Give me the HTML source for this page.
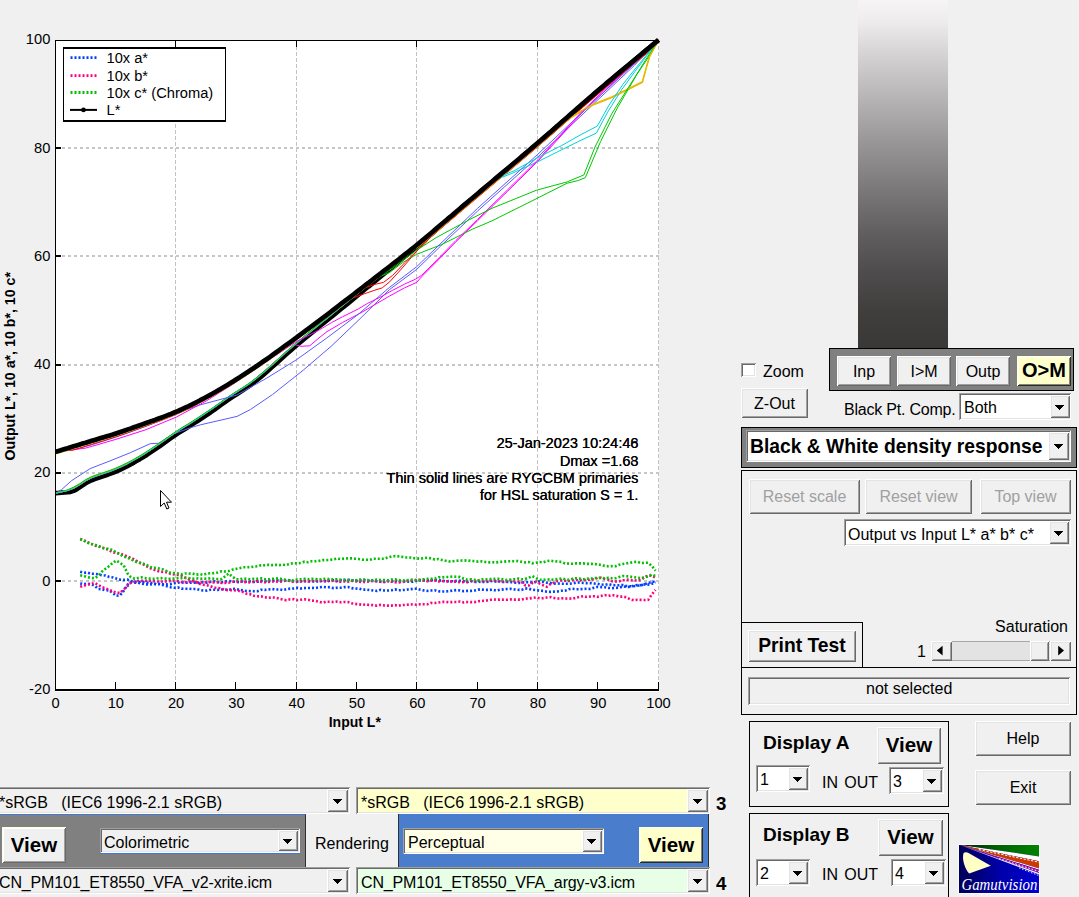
<!DOCTYPE html>
<html><head><meta charset="utf-8"><title>Gamutvision</title>
<style>
*{box-sizing:border-box;margin:0;padding:0}
html,body{width:1079px;height:897px;overflow:hidden;background:#f0f0f0}
body{position:relative;font-family:"Liberation Sans",sans-serif;font-size:16px;color:#000}
.a{position:absolute;white-space:nowrap}
.t{position:absolute;white-space:nowrap;line-height:1;}
.btn{position:absolute;background:#f0f0f0;box-shadow:inset 1px 1px 0 #fff,inset -1px -1px 0 #696969,inset 2px 2px 0 #e3e3e3,inset -2px -2px 0 #a0a0a0;display:flex;align-items:center;justify-content:center;white-space:nowrap;padding-top:2px}
.btn.y{background:#ffffcc;box-shadow:inset 1px 1px 0 #ffffee,inset -1px -1px 0 #2a2a2a,inset 2px 2px 0 #ffffd8,inset -2px -2px 0 #86866c}
.btn.b{font-weight:bold}
.btn.dis{color:#a0a0a0;padding-top:0}
.cb{position:absolute;background:#fff;box-shadow:inset 1px 1px 0 #a0a0a0,inset -1px -1px 0 #fff,inset 2px 2px 0 #696969,inset -2px -2px 0 #e3e3e3;white-space:nowrap;overflow:hidden}
.cb .tx{position:absolute;left:5px;top:0;bottom:0;display:flex;align-items:center}
.cb .ar{position:absolute;right:2px;top:2px;bottom:2px;width:20px;background:#f0f0f0;box-shadow:inset 1px 1px 0 #fff,inset -1px -1px 0 #696969,inset 2px 2px 0 #e3e3e3,inset -2px -2px 0 #a0a0a0}
.cb .ar:after{content:"";position:absolute;left:50%;top:50%;margin-left:-1px;margin-top:-2px;width:1px;height:1px;background:#000;box-shadow:-4px 0px 0 #000,-3px 0px 0 #000,-2px 0px 0 #000,-1px 0px 0 #000,0px 0px 0 #000,1px 0px 0 #000,2px 0px 0 #000,3px 0px 0 #000,4px 0px 0 #000,-3px 1px 0 #000,-2px 1px 0 #000,-1px 1px 0 #000,0px 1px 0 #000,1px 1px 0 #000,2px 1px 0 #000,3px 1px 0 #000,-2px 2px 0 #000,-1px 2px 0 #000,0px 2px 0 #000,1px 2px 0 #000,2px 2px 0 #000,-1px 3px 0 #000,0px 3px 0 #000,1px 3px 0 #000,0px 4px 0 #000}
.pn{position:absolute;border:1px solid #000}
.sunk{position:absolute;box-shadow:inset 1px 1px 0 #a0a0a0,inset -1px -1px 0 #fff,inset 2px 2px 0 #696969,inset -2px -2px 0 #e3e3e3}
svg text{font-family:"Liberation Sans",sans-serif}
</style></head>
<body>
<svg class="a" style="left:0;top:0" width="1079" height="897" viewBox="0 0 1079 897">
<rect x="55" y="40" width="604" height="652" fill="#fff"/>
<line x1="175.5" y1="41" x2="175.5" y2="689" stroke="#c3c3c3" stroke-width="1" stroke-dasharray="4 2" stroke-dashoffset="1"/>
<line x1="296.5" y1="41" x2="296.5" y2="689" stroke="#c3c3c3" stroke-width="1" stroke-dasharray="4 2" stroke-dashoffset="1"/>
<line x1="416.5" y1="41" x2="416.5" y2="689" stroke="#c3c3c3" stroke-width="1" stroke-dasharray="4 2" stroke-dashoffset="1"/>
<line x1="537.5" y1="41" x2="537.5" y2="689" stroke="#c3c3c3" stroke-width="1" stroke-dasharray="4 2" stroke-dashoffset="1"/>
<line x1="658.5" y1="41" x2="658.5" y2="689" stroke="#c3c3c3" stroke-width="1" stroke-dasharray="4 2" stroke-dashoffset="1"/>
<line x1="62" y1="581" x2="659" y2="581" stroke="#c6c6c6" stroke-width="2" stroke-dasharray="3 3"/>
<line x1="62" y1="473" x2="659" y2="473" stroke="#c6c6c6" stroke-width="2" stroke-dasharray="3 3"/>
<line x1="62" y1="365" x2="659" y2="365" stroke="#c6c6c6" stroke-width="2" stroke-dasharray="3 3"/>
<line x1="62" y1="256" x2="659" y2="256" stroke="#c6c6c6" stroke-width="2" stroke-dasharray="3 3"/>
<line x1="62" y1="148" x2="659" y2="148" stroke="#c6c6c6" stroke-width="2" stroke-dasharray="3 3"/>
<path d="M80.2 571.8 L83.8 572.7 L87.5 572.6 L91.1 573.8 L94.7 573.8 L98.3 574.3 L101.9 575.4 L105.5 575.5 L109.2 576.9 L112.8 577.4 L116.4 578.6 L120.0 579.6 L123.6 579.9 L127.3 579.6 L130.9 581.0 L134.5 581.9 L138.1 582.1 L141.7 581.6 L145.3 582.2 L149.0 583.1 L152.6 582.8 L156.2 584.4 L159.8 584.2 L163.4 585.2 L167.1 586.3 L170.7 587.3 L174.3 587.8 L177.9 587.4 L181.5 588.6 L185.1 588.8 L188.8 588.7 L192.4 589.1 L196.0 589.0 L199.6 589.9 L203.2 590.5 L206.9 590.6 L210.5 589.8 L214.1 589.7 L217.7 589.9 L221.3 589.5 L224.9 589.5 L228.6 589.8 L232.2 589.1 L235.8 588.8 L239.4 589.8 L243.0 590.4 L246.7 591.0 L250.3 591.1 L253.9 591.2 L257.5 591.2 L261.1 589.7 L264.7 589.9 L268.4 589.5 L272.0 588.9 L275.6 589.6 L279.2 589.4 L282.8 590.0 L286.4 589.2 L290.1 588.6 L293.7 588.5 L297.3 587.9 L300.9 588.5 L304.5 588.1 L308.2 588.0 L311.8 587.9 L315.4 588.1 L319.0 587.4 L322.6 586.8 L326.2 587.3 L329.9 587.1 L333.5 588.1 L337.1 587.7 L340.7 587.7 L344.3 587.1 L348.0 587.1 L351.6 588.1 L355.2 588.6 L358.8 588.5 L362.4 589.6 L366.0 589.6 L369.7 590.1 L373.3 590.5 L376.9 590.9 L380.5 589.8 L384.1 590.4 L387.8 590.5 L391.4 590.3 L395.0 589.4 L398.6 590.3 L402.2 590.1 L405.8 589.9 L409.5 589.2 L413.1 588.9 L416.7 588.7 L420.3 589.8 L423.9 590.4 L427.6 590.9 L431.2 590.5 L434.8 590.2 L438.4 591.3 L442.0 591.5 L445.6 591.4 L449.3 591.2 L452.9 590.5 L456.5 590.1 L460.1 590.5 L463.7 591.2 L467.3 590.9 L471.0 590.9 L474.6 590.5 L478.2 589.6 L481.8 589.6 L485.4 589.9 L489.1 589.9 L492.7 589.8 L496.3 590.7 L499.9 589.8 L503.5 589.4 L507.1 589.0 L510.8 588.8 L514.4 589.4 L518.0 589.8 L521.6 589.9 L525.2 588.4 L528.9 588.8 L532.5 589.7 L536.1 590.1 L539.7 590.7 L543.3 590.9 L546.9 591.7 L550.6 591.9 L554.2 591.6 L557.8 591.4 L561.4 590.7 L565.0 590.8 L568.7 589.3 L572.3 588.8 L575.9 589.2 L579.5 589.2 L583.1 589.0 L586.7 588.8 L590.4 589.0 L594.0 587.8 L597.6 586.8 L601.2 587.1 L604.8 587.2 L608.5 587.9 L612.1 588.3 L615.7 587.9 L619.3 587.7 L622.9 586.5 L626.5 586.8 L630.2 587.1 L633.8 585.5 L637.4 585.0 L641.0 585.2 L644.6 584.4 L648.2 584.6 L651.9 583.7 L655.5 582.2" fill="none" stroke="#0040ff" stroke-width="2.6" stroke-dasharray="2 2"/>
<path d="M80.2 538.9 L83.8 540.2 L87.5 542.2 L91.1 543.8 L94.7 545.6 L98.3 546.2 L101.9 547.6 L105.5 548.5 L109.2 550.4 L112.8 552.3 L116.4 552.9 L120.0 553.6 L123.6 555.0 L127.3 556.4 L130.9 557.9 L134.5 559.5 L138.1 562.0 L141.7 563.6 L145.3 565.4 L149.0 567.6 L152.6 569.3 L156.2 570.4 L159.8 571.6 L163.4 572.0 L167.1 572.3 L170.7 573.9 L174.3 574.5 L177.9 575.0 L181.5 575.7 L185.1 577.6 L188.8 579.3 L192.4 580.7 L196.0 582.2 L199.6 583.8 L203.2 584.7 L206.9 585.3 L210.5 586.3 L214.1 587.6 L217.7 588.1 L221.3 588.3 L224.9 590.0 L228.6 590.2 L232.2 590.1 L235.8 590.5 L239.4 591.0 L243.0 592.0 L246.7 593.8 L250.3 594.3 L253.9 595.8 L257.5 596.3 L261.1 596.4 L264.7 597.3 L268.4 597.9 L272.0 597.4 L275.6 597.6 L279.2 598.7 L282.8 599.6 L286.4 600.2 L290.1 599.3 L293.7 599.1 L297.3 600.2 L300.9 599.7 L304.5 599.3 L308.2 599.7 L311.8 600.6 L315.4 600.8 L319.0 601.8 L322.6 602.7 L326.2 601.7 L329.9 601.7 L333.5 602.0 L337.1 601.6 L340.7 602.3 L344.3 602.0 L348.0 602.0 L351.6 603.2 L355.2 603.9 L358.8 604.3 L362.4 604.8 L366.0 604.5 L369.7 605.0 L373.3 605.1 L376.9 605.7 L380.5 604.9 L384.1 605.4 L387.8 605.6 L391.4 605.6 L395.0 605.1 L398.6 605.7 L402.2 605.0 L405.8 604.9 L409.5 604.6 L413.1 604.2 L416.7 604.7 L420.3 604.2 L423.9 604.2 L427.6 604.3 L431.2 602.9 L434.8 603.0 L438.4 602.5 L442.0 601.9 L445.6 601.9 L449.3 602.2 L452.9 602.1 L456.5 602.0 L460.1 601.5 L463.7 602.4 L467.3 602.0 L471.0 602.1 L474.6 602.1 L478.2 601.2 L481.8 601.0 L485.4 600.7 L489.1 600.1 L492.7 599.4 L496.3 599.7 L499.9 599.6 L503.5 599.7 L507.1 599.7 L510.8 599.4 L514.4 599.6 L518.0 599.6 L521.6 599.6 L525.2 598.7 L528.9 598.5 L532.5 598.0 L536.1 597.5 L539.7 598.3 L543.3 598.2 L546.9 597.5 L550.6 597.1 L554.2 598.0 L557.8 598.5 L561.4 598.2 L565.0 598.6 L568.7 598.5 L572.3 598.7 L575.9 597.7 L579.5 596.9 L583.1 596.2 L586.7 597.0 L590.4 596.5 L594.0 596.2 L597.6 596.8 L601.2 595.9 L604.8 595.1 L608.5 595.9 L612.1 595.0 L615.7 595.7 L619.3 596.6 L622.9 596.6 L626.5 597.3 L630.2 599.3 L633.8 600.2 L637.4 599.8 L641.0 599.9 L644.6 600.0 L648.2 599.8 L651.9 594.4 L655.5 589.9" fill="none" stroke="#ff0080" stroke-width="2.6" stroke-dasharray="2 2"/>
<path d="M80.2 539.2 L83.8 540.6 L87.5 542.7 L91.1 543.9 L94.7 544.7 L98.3 545.9 L101.9 547.9 L105.5 548.2 L109.2 549.2 L112.8 550.0 L116.4 552.6 L120.0 554.5 L123.6 556.7 L127.3 557.4 L130.9 559.3 L134.5 561.3 L138.1 562.6 L141.7 563.2 L145.3 564.3 L149.0 566.3 L152.6 567.9 L156.2 567.8 L159.8 568.8 L163.4 569.5 L167.1 571.3 L170.7 572.9 L174.3 573.0 L177.9 573.5 L181.5 574.4 L185.1 573.5 L188.8 573.6 L192.4 573.5 L196.0 574.7 L199.6 574.2 L203.2 574.8 L206.9 573.5 L210.5 573.3 L214.1 573.1 L217.7 572.5 L221.3 571.3 L224.9 571.5 L228.6 571.1 L232.2 569.7 L235.8 568.9 L239.4 568.2 L243.0 567.3 L246.7 567.3 L250.3 567.1 L253.9 566.6 L257.5 566.3 L261.1 565.2 L264.7 565.2 L268.4 564.8 L272.0 565.1 L275.6 564.8 L279.2 565.1 L282.8 564.8 L286.4 565.0 L290.1 563.7 L293.7 563.2 L297.3 563.4 L300.9 562.9 L304.5 561.7 L308.2 562.2 L311.8 561.2 L315.4 561.2 L319.0 560.9 L322.6 560.1 L326.2 560.2 L329.9 559.9 L333.5 559.4 L337.1 558.5 L340.7 559.1 L344.3 558.6 L348.0 558.4 L351.6 558.4 L355.2 558.7 L358.8 559.0 L362.4 559.6 L366.0 559.8 L369.7 559.9 L373.3 558.7 L376.9 558.7 L380.5 558.8 L384.1 558.8 L387.8 557.4 L391.4 556.4 L395.0 556.1 L398.6 556.4 L402.2 556.9 L405.8 557.4 L409.5 557.5 L413.1 558.3 L416.7 558.3 L420.3 558.8 L423.9 558.1 L427.6 557.7 L431.2 558.4 L434.8 559.5 L438.4 559.0 L442.0 560.0 L445.6 560.7 L449.3 561.5 L452.9 561.2 L456.5 560.8 L460.1 560.5 L463.7 560.7 L467.3 560.3 L471.0 561.0 L474.6 561.1 L478.2 561.6 L481.8 561.4 L485.4 562.0 L489.1 562.4 L492.7 562.3 L496.3 562.4 L499.9 561.9 L503.5 561.7 L507.1 561.3 L510.8 561.3 L514.4 561.2 L518.0 561.0 L521.6 561.7 L525.2 562.4 L528.9 562.0 L532.5 563.3 L536.1 562.7 L539.7 562.0 L543.3 562.4 L546.9 561.0 L550.6 560.7 L554.2 561.3 L557.8 561.6 L561.4 561.9 L565.0 563.4 L568.7 563.6 L572.3 563.8 L575.9 563.4 L579.5 563.4 L583.1 563.4 L586.7 563.9 L590.4 563.8 L594.0 564.1 L597.6 564.2 L601.2 565.1 L604.8 565.9 L608.5 566.3 L612.1 566.1 L615.7 566.2 L619.3 564.7 L622.9 564.0 L626.5 563.4 L630.2 562.7 L633.8 562.1 L637.4 561.8 L641.0 563.1 L644.6 562.8 L648.2 562.8 L651.9 565.9 L655.5 570.7" fill="none" stroke="#00c000" stroke-width="2.6" stroke-dasharray="2 2"/>
<path d="M80.2 583.4 L83.8 584.2 L87.5 583.7 L91.1 584.2 L94.7 585.8 L98.3 588.9 L101.9 589.2 L105.5 590.3 L109.2 590.4 L112.8 592.9 L116.4 595.8 L120.0 595.4 L123.6 590.9 L127.3 585.0 L130.9 582.3 L134.5 582.6 L138.1 582.7 L141.7 583.7 L145.3 584.3 L149.0 584.6 L152.6 584.0 L156.2 584.1 L159.8 583.7 L163.4 584.2 L167.1 584.4 L170.7 584.1 L174.3 583.3 L177.9 582.7 L181.5 582.4 L185.1 582.8 L188.8 582.6 L192.4 582.6 L196.0 582.6 L199.6 583.0 L203.2 582.1 L206.9 582.6 L210.5 581.7 L214.1 581.2 L217.7 582.2 L221.3 582.2 L224.9 581.6 L228.6 580.9 L232.2 581.3 L235.8 581.8 L239.4 582.2 L243.0 581.2 L246.7 581.8 L250.3 581.5 L253.9 582.0 L257.5 581.7 L261.1 580.8 L264.7 581.5 L268.4 580.8 L272.0 580.9 L275.6 580.3 L279.2 580.2 L282.8 580.9 L286.4 580.2 L290.1 580.4 L293.7 581.2 L297.3 581.7 L300.9 581.3 L304.5 581.1 L308.2 581.2 L311.8 581.5 L315.4 581.4 L319.0 581.4 L322.6 580.6 L326.2 581.4 L329.9 580.7 L333.5 580.2 L337.1 580.9 L340.7 580.2 L344.3 580.1 L348.0 579.7 L351.6 580.4 L355.2 580.7 L358.8 580.9 L362.4 580.1 L366.0 580.2 L369.7 580.7 L373.3 580.9 L376.9 581.2 L380.5 581.8 L384.1 582.0 L387.8 581.1 L391.4 581.4 L395.0 580.6 L398.6 581.2 L402.2 581.5 L405.8 581.3 L409.5 581.7 L413.1 581.7 L416.7 580.8 L420.3 580.4 L423.9 580.3 L427.6 580.5 L431.2 580.2 L434.8 580.0 L438.4 580.4 L442.0 580.5 L445.6 581.5 L449.3 581.1 L452.9 581.3 L456.5 580.9 L460.1 580.9 L463.7 581.4 L467.3 582.1 L471.0 581.2 L474.6 581.9 L478.2 581.8 L481.8 581.9 L485.4 582.1 L489.1 581.6 L492.7 580.9 L496.3 581.6 L499.9 581.5 L503.5 582.0 L507.1 581.9 L510.8 582.1 L514.4 582.6 L518.0 582.9 L521.6 583.0 L525.2 582.1 L528.9 582.1 L532.5 582.6 L536.1 581.9 L539.7 581.3 L543.3 581.9 L546.9 582.7 L550.6 583.1 L554.2 583.6 L557.8 583.5 L561.4 583.8 L565.0 583.8 L568.7 583.8 L572.3 583.4 L575.9 582.7 L579.5 582.5 L583.1 582.9 L586.7 583.2 L590.4 583.2 L594.0 583.5 L597.6 583.7 L601.2 584.5 L604.8 584.8 L608.5 584.1 L612.1 585.1 L615.7 585.2 L619.3 585.2 L622.9 585.0 L626.5 586.0 L630.2 586.3 L633.8 586.2 L637.4 585.8 L641.0 585.3 L644.6 584.2 L648.2 583.1 L651.9 581.7 L655.5 581.7" fill="none" stroke="#0040ff" stroke-width="2.6" stroke-dasharray="2 2"/>
<path d="M80.2 586.8 L83.8 585.7 L87.5 584.6 L91.1 584.0 L94.7 582.9 L98.3 584.9 L101.9 587.1 L105.5 588.3 L109.2 589.8 L112.8 591.5 L116.4 592.4 L120.0 593.1 L123.6 589.5 L127.3 586.3 L130.9 582.7 L134.5 581.7 L138.1 581.0 L141.7 580.9 L145.3 580.9 L149.0 580.7 L152.6 581.1 L156.2 581.1 L159.8 581.9 L163.4 581.2 L167.1 581.6 L170.7 580.8 L174.3 580.7 L177.9 581.2 L181.5 581.9 L185.1 582.1 L188.8 581.7 L192.4 581.3 L196.0 582.0 L199.6 582.6 L203.2 582.2 L206.9 581.9 L210.5 582.1 L214.1 582.5 L217.7 582.1 L221.3 582.9 L224.9 582.9 L228.6 582.7 L232.2 581.8 L235.8 581.8 L239.4 581.4 L243.0 581.7 L246.7 582.2 L250.3 582.4 L253.9 581.5 L257.5 581.2 L261.1 581.7 L264.7 582.3 L268.4 582.0 L272.0 581.5 L275.6 581.5 L279.2 581.8 L282.8 581.2 L286.4 580.5 L290.1 581.1 L293.7 581.7 L297.3 581.6 L300.9 581.5 L304.5 581.0 L308.2 581.5 L311.8 580.9 L315.4 580.6 L319.0 580.8 L322.6 581.4 L326.2 580.6 L329.9 581.2 L333.5 580.7 L337.1 581.4 L340.7 581.8 L344.3 581.3 L348.0 581.6 L351.6 580.9 L355.2 581.1 L358.8 581.7 L362.4 582.0 L366.0 581.9 L369.7 581.5 L373.3 580.7 L376.9 581.5 L380.5 581.6 L384.1 581.9 L387.8 581.0 L391.4 581.6 L395.0 582.2 L398.6 582.5 L402.2 582.1 L405.8 581.2 L409.5 580.6 L413.1 580.5 L416.7 580.0 L420.3 579.8 L423.9 580.6 L427.6 581.3 L431.2 580.6 L434.8 580.4 L438.4 581.4 L442.0 581.0 L445.6 581.2 L449.3 581.3 L452.9 581.5 L456.5 581.8 L460.1 582.2 L463.7 582.0 L467.3 581.8 L471.0 580.8 L474.6 581.4 L478.2 580.5 L481.8 581.1 L485.4 581.3 L489.1 580.7 L492.7 580.4 L496.3 580.8 L499.9 581.6 L503.5 581.4 L507.1 581.5 L510.8 580.7 L514.4 581.4 L518.0 581.5 L521.6 582.0 L525.2 585.3 L528.9 585.5 L532.5 582.9 L536.1 581.6 L539.7 583.6 L543.3 585.3 L546.9 586.8 L550.6 583.9 L554.2 582.5 L557.8 581.0 L561.4 580.3 L565.0 580.7 L568.7 581.0 L572.3 580.1 L575.9 580.0 L579.5 580.4 L583.1 579.9 L586.7 580.1 L590.4 579.6 L594.0 579.4 L597.6 577.8 L601.2 577.9 L604.8 579.0 L608.5 579.7 L612.1 581.3 L615.7 581.5 L619.3 581.2 L622.9 580.3 L626.5 579.6 L630.2 580.1 L633.8 580.5 L637.4 580.4 L641.0 579.9 L644.6 577.0 L648.2 575.6 L651.9 575.8 L655.5 577.7" fill="none" stroke="#ff0080" stroke-width="2.6" stroke-dasharray="2 2"/>
<path d="M80.2 575.3 L83.8 576.0 L87.5 577.1 L91.1 577.9 L94.7 578.2 L98.3 575.9 L101.9 571.7 L105.5 568.8 L109.2 566.1 L112.8 562.8 L116.4 560.5 L120.0 562.9 L123.6 565.1 L127.3 573.1 L130.9 577.1 L134.5 578.7 L138.1 578.0 L141.7 577.4 L145.3 578.0 L149.0 578.5 L152.6 578.8 L156.2 578.6 L159.8 578.1 L163.4 578.3 L167.1 578.7 L170.7 578.8 L174.3 578.5 L177.9 578.3 L181.5 578.1 L185.1 577.9 L188.8 578.0 L192.4 578.9 L196.0 578.3 L199.6 578.7 L203.2 578.6 L206.9 578.8 L210.5 578.3 L214.1 578.8 L217.7 579.1 L221.3 579.2 L224.9 576.5 L228.6 573.6 L232.2 576.4 L235.8 579.2 L239.4 579.3 L243.0 578.5 L246.7 578.8 L250.3 579.4 L253.9 578.8 L257.5 578.8 L261.1 578.3 L264.7 579.3 L268.4 579.4 L272.0 578.9 L275.6 578.6 L279.2 578.3 L282.8 579.5 L286.4 579.8 L290.1 580.3 L293.7 580.5 L297.3 579.4 L300.9 579.3 L304.5 578.8 L308.2 579.2 L311.8 578.8 L315.4 579.1 L319.0 579.6 L322.6 579.1 L326.2 578.6 L329.9 579.5 L333.5 579.3 L337.1 579.2 L340.7 579.7 L344.3 579.7 L348.0 580.1 L351.6 580.2 L355.2 580.2 L358.8 579.7 L362.4 579.3 L366.0 579.8 L369.7 580.4 L373.3 580.2 L376.9 579.6 L380.5 580.0 L384.1 580.1 L387.8 580.3 L391.4 579.5 L395.0 579.4 L398.6 580.1 L402.2 580.5 L405.8 580.3 L409.5 579.9 L413.1 579.6 L416.7 580.2 L420.3 580.2 L423.9 579.2 L427.6 578.9 L431.2 578.8 L434.8 578.6 L438.4 577.3 L442.0 577.4 L445.6 577.0 L449.3 576.9 L452.9 576.6 L456.5 576.7 L460.1 577.1 L463.7 578.7 L467.3 579.8 L471.0 579.3 L474.6 579.8 L478.2 580.4 L481.8 579.4 L485.4 579.5 L489.1 578.9 L492.7 579.2 L496.3 578.6 L499.9 578.9 L503.5 579.5 L507.1 580.1 L510.8 579.6 L514.4 579.2 L518.0 578.5 L521.6 579.3 L525.2 579.0 L528.9 577.6 L532.5 576.1 L536.1 578.2 L539.7 579.8 L543.3 579.9 L546.9 579.1 L550.6 579.8 L554.2 579.6 L557.8 579.0 L561.4 578.4 L565.0 579.2 L568.7 579.8 L572.3 578.8 L575.9 578.2 L579.5 578.6 L583.1 579.4 L586.7 578.6 L590.4 578.8 L594.0 578.1 L597.6 578.0 L601.2 577.7 L604.8 578.4 L608.5 577.8 L612.1 578.3 L615.7 578.2 L619.3 577.0 L622.9 576.0 L626.5 576.2 L630.2 576.6 L633.8 577.2 L637.4 577.6 L641.0 578.1 L644.6 577.4 L648.2 576.3 L651.9 574.5 L655.5 576.1" fill="none" stroke="#00c000" stroke-width="2.6" stroke-dasharray="2 2"/>
<path d="M55.5 493.2 L58.5 493.0 L61.5 492.7 L64.5 492.5 L67.6 492.2 L70.6 491.8 L73.6 490.8 L76.6 489.3 L79.6 487.3 L82.6 485.3 L85.7 483.3 L88.7 481.5 L91.7 480.2 L94.7 479.0 L97.7 478.0 L100.7 477.0 L103.7 476.0 L106.8 475.0 L109.8 473.9 L112.8 472.8 L115.8 471.6 L118.8 470.3 L121.8 468.8 L124.8 467.4 L127.9 465.8 L130.9 464.2 L133.9 462.6 L136.9 460.8 L139.9 459.1 L142.9 457.3 L145.9 455.4 L149.0 453.4 L152.0 451.4 L155.0 449.3 L158.0 447.3 L161.0 445.2 L164.0 443.1 L167.1 440.9 L170.1 438.7 L173.1 436.6 L176.1 434.5 L179.1 432.6 L182.1 430.7 L185.1 428.9 L188.2 427.0 L191.2 425.1 L194.2 423.1 L197.2 421.2 L200.2 419.2 L203.2 417.2 L206.2 415.2 L209.3 413.2 L212.3 411.1 L215.3 409.0 L218.3 406.8 L221.3 404.6 L224.3 402.5 L227.4 400.3 L230.4 398.3 L233.4 396.3 L236.4 394.4 L239.4 392.5 L242.4 390.6 L245.4 388.6 L248.5 386.6 L251.5 384.4 L254.5 382.0 L257.5 379.6 L260.5 377.1 L263.5 374.6 L266.6 372.0 L269.6 369.3 L272.6 366.6 L275.6 363.9 L278.6 361.2 L281.6 358.5 L284.6 355.7 L287.7 353.0 L290.7 350.4 L293.7 347.8 L296.7 345.2 L299.7 342.7 L302.7 340.2 L305.7 337.7 L308.8 335.2 L311.8 332.7 L314.8 330.3 L317.8 327.8 L320.8 325.3 L323.8 322.9 L326.9 320.5 L329.9 318.0 L332.9 315.6 L335.9 313.1 L338.9 310.7 L341.9 308.2 L344.9 305.8 L348.0 303.4 L351.0 300.9 L354.0 298.4 L357.0 296.0 L360.0 293.5 L363.0 291.0 L366.0 288.5 L369.1 286.1 L372.1 283.6 L375.1 281.1 L378.1 278.7 L381.1 276.2 L384.1 273.7 L387.2 271.3 L390.2 268.8 L393.2 266.3 L396.2 263.8 L399.2 261.3 L402.2 258.8 L405.2 256.3 L408.3 253.8 L411.3 251.3 L414.3 248.7 L417.3 246.2 L420.3 243.6 L423.3 241.0 L426.3 238.4 L429.4 235.7 L432.4 233.1 L435.4 230.4 L438.4 227.8 L441.4 225.2 L444.4 222.5 L447.4 219.9 L450.5 217.3 L453.5 214.7 L456.5 212.2 L459.5 209.6 L462.5 207.0 L465.5 204.4 L468.6 201.9 L471.6 199.3 L474.6 196.8 L477.6 194.2 L480.6 191.7 L483.6 189.1 L486.6 186.6 L489.7 184.0 L492.7 181.5 L495.7 179.0 L498.7 176.4 L501.7 173.9 L504.7 171.4 L507.8 168.8 L510.8 166.3 L513.8 163.8 L516.8 161.2 L519.8 158.7 L522.8 156.1 L525.8 153.6 L528.9 151.0 L531.9 148.5 L534.9 145.9 L537.9 143.3 L540.9 140.7 L543.9 138.1 L546.9 135.5 L550.0 132.9 L553.0 130.3 L556.0 127.6 L559.0 125.0 L562.0 122.4 L565.0 119.7 L568.1 117.1 L571.1 114.4 L574.1 111.8 L577.1 109.1 L580.1 106.5 L583.1 103.9 L586.1 101.2 L589.2 98.6 L592.2 96.0 L595.2 93.4 L598.2 90.8 L601.2 88.2 L604.2 85.7 L607.2 83.1 L610.3 80.5 L613.3 78.0 L616.3 75.4 L619.3 72.9 L622.3 70.4 L625.3 67.8 L628.4 65.3 L631.4 62.8 L634.4 60.2 L637.4 57.7 L640.4 55.2 L643.4 52.6 L646.4 50.1 L649.5 47.6 L652.5 45.0 L655.5 42.5 L658.5 40.0" fill="none" stroke="#000" stroke-width="4.7" stroke-linejoin="round"/>
<path d="M55.5 493.0 L61.5 489.7 L71.8 480.5 L90.2 468.6 L111.0 460.5 L130.3 452.7 L150.2 443.7 L158.6 443.2 L173.1 434.0 L191.2 427.5 L200.5 424.8 L237.0 416.4 L250.3 409.6 L272.6 394.5 L303.3 370.1 L331.7 345.8 L361.2 317.6 L389.6 289.5 L416.7 269.4 L440.5 246.2 L477.6 211.0 L537.9 156.9 L598.2 99.5 L634.4 65.4 L658.5 40.0" fill="none" stroke="#5a5aff" stroke-width="1" stroke-linejoin="round"/>
<path d="M55.5 493.2 L61.5 491.9 L67.6 490.6 L73.6 488.3 L79.6 484.9 L85.7 480.8 L91.7 477.7 L97.7 475.5 L103.7 473.5 L109.8 471.4 L115.8 469.0 L121.8 466.3 L127.9 463.3 L133.9 460.0 L139.9 456.5 L145.9 452.8 L152.0 448.8 L158.0 444.7 L164.0 440.5 L170.1 436.1 L176.1 431.9 L182.1 428.1 L188.2 424.4 L194.2 420.5 L200.2 416.6 L206.2 412.5 L212.3 408.4 L218.3 404.1 L224.3 399.8 L230.4 395.6 L236.4 391.7 L242.4 387.9 L248.5 383.9 L254.5 379.3 L260.5 374.4 L266.6 369.2 L272.6 363.9 L278.6 358.5 L284.6 353.0 L290.7 347.7 L295.5 344.9 L300.9 346.3 L309.7 345.8 L319.0 337.9 L326.9 331.7 L342.5 322.5 L361.2 312.7 L373.9 305.2 L389.6 296.0 L404.6 287.8 L416.7 282.4 L422.1 276.2 L430.0 268.4 L439.0 259.2 L455.9 241.8 L477.6 220.7 L507.8 191.0 L537.9 161.2 L581.3 113.6 L616.3 80.0 L640.4 56.2 L658.5 40.0" fill="none" stroke="#ff00ff" stroke-width="1" stroke-linejoin="round"/>
<path d="M55.5 493.2 L61.5 491.7 L67.6 490.1 L73.6 487.7 L79.6 484.2 L85.7 480.1 L91.7 477.1 L97.7 474.9 L103.7 472.9 L109.8 470.9 L115.8 468.5 L121.8 465.8 L127.9 462.8 L133.9 459.6 L139.9 456.1 L145.9 452.5 L152.0 448.5 L158.0 444.4 L164.0 440.2 L170.1 435.9 L176.1 431.7 L182.1 427.9 L188.2 424.2 L194.2 420.4 L200.2 416.5 L206.2 412.5 L212.3 408.4 L218.3 404.1 L224.3 399.8 L230.4 395.6 L236.4 391.8 L242.4 388.0 L248.5 384.0 L254.5 379.5 L260.5 374.6 L266.6 369.5 L272.6 364.1 L278.6 358.7 L284.6 353.3 L290.7 348.0 L296.7 342.8 L302.7 337.8 L308.8 332.9 L314.8 327.9 L320.8 323.1 L326.9 318.2 L332.9 313.3 L338.9 308.4 L344.9 303.5 L351.0 298.6 L361.2 294.9 L373.9 290.5 L382.3 287.8 L389.6 281.9 L398.6 272.1 L409.5 259.7 L417.3 250.5 L426.3 240.8 L432.4 235.7 L438.4 230.6 L444.4 225.5 L450.5 220.4 L456.5 215.3 L462.5 210.2 L468.6 205.1 L474.6 200.0 L480.6 194.9 L486.6 189.8 L492.7 184.8 L498.7 179.7 L504.7 174.6 L510.8 169.6 L516.8 164.5 L522.8 159.4 L528.9 154.3 L534.9 149.2 L540.9 144.0 L546.9 138.8 L553.0 133.5 L559.0 128.2 L565.0 122.9 L571.1 117.6 L577.1 112.4 L583.1 107.1 L589.2 101.8 L595.2 96.7 L601.2 91.5 L607.2 86.4 L613.3 81.3 L619.3 76.3 L625.3 71.3 L631.4 66.3 L637.4 61.3 L643.4 56.3 L649.5 51.3 L655.5 46.3 L658.5 40.0" fill="none" stroke="#ff0000" stroke-width="1" stroke-linejoin="round"/>
<path d="M55.5 493.2 L61.5 491.8 L67.6 490.4 L73.6 488.1 L79.6 484.7 L85.7 480.6 L91.7 477.6 L97.7 475.4 L103.7 473.4 L109.8 471.3 L115.8 469.0 L121.8 466.3 L127.9 463.3 L133.9 460.0 L139.9 456.6 L145.9 452.9 L152.0 448.9 L158.0 444.8 L164.0 440.6 L170.1 436.3 L176.1 432.1 L182.1 428.3 L188.2 424.6 L194.2 420.8 L200.2 416.8 L206.2 412.8 L212.3 408.8 L218.3 404.5 L224.3 400.2 L230.4 396.0 L236.4 392.1 L242.4 388.3 L248.5 384.3 L254.5 379.8 L260.5 374.9 L266.6 369.8 L272.6 364.4 L278.6 359.0 L284.6 353.6 L290.7 348.2 L296.7 343.1 L302.7 338.1 L308.8 333.1 L314.8 328.2 L320.8 323.3 L326.9 318.4 L332.9 313.5 L338.9 308.6 L344.9 303.7 L351.0 298.8 L357.0 293.9 L363.0 289.0 L369.1 284.0 L375.1 279.1 L381.1 274.2 L387.2 269.2 L393.2 264.2 L399.2 259.3 L405.2 254.2 L411.3 249.2 L417.3 247.5 L423.3 242.6 L429.4 237.5 L435.4 232.4 L441.4 227.3 L447.4 222.2 L453.5 217.1 L459.5 212.0 L465.5 206.9 L471.6 201.7 L477.6 196.6 L483.6 191.6 L489.7 186.5 L495.7 181.4 L501.7 176.4 L507.8 171.3 L513.8 166.2 L519.8 161.1 L525.8 156.0 L531.9 150.9 L537.9 145.8 L543.9 140.6 L550.0 135.3 L556.0 130.1 L562.0 124.8 L568.1 119.5 L581.1 111.6 L592.3 105.5 L611.8 97.7 L628.5 89.3 L642.4 82.4 L646.6 67.0 L649.4 57.3 L657.7 42.0" fill="none" stroke="#e6b800" stroke-width="1.3" stroke-linejoin="round"/>
<path d="M55.5 493.2 L61.5 491.5 L67.6 489.8 L73.6 487.1 L79.6 483.7 L85.7 479.6 L91.7 476.6 L97.7 474.4 L103.7 472.5 L109.8 470.4 L115.8 468.1 L121.8 465.4 L127.9 462.4 L133.9 459.2 L139.9 455.7 L145.9 452.0 L152.0 448.1 L158.0 444.0 L164.0 439.8 L170.1 435.5 L176.1 431.3 L182.1 427.5 L188.2 423.9 L194.2 420.0 L200.2 416.1 L206.2 412.1 L212.3 408.1 L218.3 403.8 L224.3 399.5 L230.4 395.3 L236.4 391.4 L242.4 387.7 L248.5 383.7 L254.5 379.2 L260.5 374.3 L266.6 369.2 L272.6 363.9 L278.6 358.5 L284.6 353.1 L290.7 347.7 L296.7 342.6 L302.7 337.6 L308.8 332.6 L314.8 327.7 L320.8 322.8 L326.9 318.0 L332.9 313.1 L338.9 308.2 L344.9 303.3 L351.0 298.4 L357.0 293.5 L363.0 288.5 L369.1 283.6 L375.1 278.7 L390.2 272.1 L402.2 262.9 L416.7 254.3 L441.8 244.5 L472.4 229.2 L491.9 220.9 L531.0 201.4 L567.2 183.2 L578.3 180.5 L585.3 177.7 L600.6 141.5 L617.3 108.0 L636.8 74.6 L650.8 53.7 L657.7 41.1" fill="none" stroke="#00c800" stroke-width="1" stroke-linejoin="round"/>
<path d="M55.5 493.2 L61.5 492.0 L67.6 490.6 L73.6 488.5 L79.6 485.0 L85.7 480.9 L91.7 477.9 L97.7 475.7 L103.7 473.7 L109.8 471.6 L115.8 469.3 L121.8 466.6 L127.9 463.6 L133.9 460.3 L139.9 456.9 L145.9 453.2 L152.0 449.2 L158.0 445.1 L164.0 440.9 L170.1 436.6 L176.1 432.4 L182.1 428.6 L188.2 424.9 L194.2 421.0 L200.2 417.1 L206.2 413.1 L212.3 409.0 L218.3 404.7 L224.3 400.4 L230.4 396.2 L236.4 392.3 L242.4 388.6 L248.5 384.6 L254.5 380.1 L260.5 375.2 L266.6 370.0 L272.6 364.7 L278.6 359.2 L284.6 353.8 L290.7 348.5 L296.7 343.3 L302.7 338.3 L308.8 333.3 L314.8 328.4 L320.8 323.5 L326.9 318.6 L332.9 313.7 L338.9 308.9 L344.9 304.0 L351.0 299.1 L357.0 294.1 L363.0 289.2 L369.1 284.2 L375.1 279.3 L381.1 274.4 L387.2 269.4 L393.2 264.5 L399.2 259.5 L405.2 254.5 L411.3 249.4 L417.3 244.3 L423.3 239.2 L429.4 233.9 L435.4 228.6 L441.4 223.3 L447.4 218.1 L453.5 212.9 L459.5 207.7 L465.5 202.6 L471.6 197.5 L477.6 192.4 L497.5 179.1 L511.5 173.5 L536.5 162.3 L558.8 151.2 L578.3 141.5 L596.4 133.1 L607.6 112.2 L621.5 89.9 L636.8 69.0 L657.7 41.1" fill="none" stroke="#00d0d8" stroke-width="1" stroke-linejoin="round"/>
<path d="M55.5 451.8 L73.6 449.7 L91.7 444.8 L115.8 437.2 L145.9 426.4 L176.1 414.0 L188.2 409.1 L200.5 404.8 L237.0 395.0 L266.6 378.2 L296.4 359.8 L326.9 337.9 L358.2 314.4 L389.6 287.3 L416.7 266.7 L439.0 245.1 L477.6 208.3 L537.9 154.2 L598.2 97.3 L634.4 63.8 L658.5 40.0" fill="none" stroke="#5a5aff" stroke-width="1" stroke-linejoin="round"/>
<path d="M55.5 451.8 L85.7 448.1 L115.8 439.4 L145.9 429.7 L176.1 417.2 L206.2 401.0 L236.4 382.0 L266.6 361.5 L296.7 341.4 L319.0 330.1 L331.7 322.5 L342.5 316.8 L358.2 309.0 L367.3 303.5 L379.9 297.3 L392.6 290.3 L404.6 284.1 L415.5 279.2 L421.5 275.4 L430.0 267.0 L439.0 257.8 L455.9 240.5 L477.6 219.4 L507.8 189.6 L537.9 159.8 L581.3 112.2 L616.3 78.6 L640.4 54.8 L658.5 40.0" fill="none" stroke="#ff00ff" stroke-width="1" stroke-linejoin="round"/>
<path d="M55.5 451.8 L61.5 451.2 L67.6 450.6 L73.6 450.0 L79.6 448.1 L85.7 446.2 L91.7 444.3 L97.7 442.4 L103.7 440.6 L109.8 438.7 L115.8 436.8 L121.8 434.7 L127.9 432.6 L133.9 430.4 L139.9 428.2 L145.9 426.0 L152.0 423.8 L158.0 421.7 L164.0 419.4 L170.1 417.0 L176.1 414.5 L182.1 411.8 L188.2 408.9 L194.2 405.9 L200.2 402.7 L206.2 399.5 L212.3 396.1 L218.3 392.6 L224.3 389.0 L230.4 385.3 L236.4 381.5 L242.4 377.6 L248.5 373.6 L254.5 369.5 L260.5 365.4 L266.6 361.1 L272.6 356.8 L278.6 352.4 L284.6 347.9 L290.7 343.5 L296.7 339.0 L302.7 334.5 L308.8 330.1 L314.8 325.5 L320.8 321.0 L326.9 316.4 L332.9 311.8 L338.9 307.2 L344.9 302.5 L351.0 297.9 L357.0 293.3 L363.0 288.6 L373.9 284.6 L383.5 282.4 L392.6 275.4 L404.6 262.9 L415.5 252.1 L425.1 243.5 L432.4 234.7 L438.4 229.5 L444.4 224.5 L450.5 219.4 L456.5 214.3 L462.5 209.1 L468.6 204.0 L474.6 198.9 L480.6 193.8 L486.6 188.7 L492.7 183.7 L498.7 178.6 L504.7 173.6 L510.8 168.5 L516.8 163.4 L522.8 158.3 L528.9 153.2 L534.9 148.1 L540.9 142.9 L546.9 137.7 L553.0 132.4 L559.0 127.2 L565.0 121.9 L571.1 116.6 L577.1 111.3 L583.1 106.0 L589.2 100.8 L595.2 95.6 L601.2 90.4 L607.2 85.3 L613.3 80.3 L619.3 75.2 L625.3 70.2 L631.4 65.2 L637.4 60.2 L643.4 55.2 L649.5 50.2 L655.5 45.2 L658.5 40.0" fill="none" stroke="#ff0000" stroke-width="1" stroke-linejoin="round"/>
<path d="M55.5 454.0 L61.5 452.2 L67.6 450.3 L73.6 448.5 L79.6 446.7 L85.7 444.8 L91.7 443.0 L97.7 441.2 L103.7 439.4 L109.8 437.6 L115.8 435.7 L121.8 433.7 L127.9 431.6 L133.9 429.5 L139.9 427.3 L145.9 425.2 L152.0 423.1 L158.0 420.9 L164.0 418.7 L170.1 416.4 L176.1 414.0 L182.1 411.3 L188.2 408.5 L194.2 405.5 L200.2 402.4 L206.2 399.2 L212.3 395.9 L218.3 392.5 L224.3 388.9 L230.4 385.2 L236.4 381.5 L242.4 377.6 L248.5 373.7 L254.5 369.7 L260.5 365.6 L266.6 361.4 L272.6 357.1 L278.6 352.8 L284.6 348.4 L290.7 344.0 L296.7 339.5 L302.7 335.1 L308.8 330.6 L314.8 326.1 L320.8 321.5 L326.9 316.9 L332.9 312.3 L338.9 307.7 L344.9 303.1 L351.0 298.4 L357.0 293.8 L363.0 289.2 L369.1 284.5 L375.1 279.9 L381.1 275.2 L387.2 270.5 L393.2 265.9 L399.2 261.1 L405.2 256.4 L411.3 251.6 L417.3 246.7 L423.3 241.8 L429.4 236.7 L435.4 231.6 L441.4 226.5 L447.4 221.4 L453.5 216.3 L459.5 211.2 L465.5 206.0 L471.6 200.9 L477.6 195.8 L483.6 190.7 L489.7 185.7 L495.7 180.6 L501.7 175.5 L507.8 170.5 L513.8 165.4 L519.8 160.3 L525.8 155.2 L531.9 150.1 L537.9 145.0 L543.9 139.8 L550.0 134.5 L556.0 129.3 L562.0 124.0 L568.1 118.7 L581.1 110.8 L592.3 104.7 L611.8 96.9 L628.5 88.5 L642.4 81.5 L646.6 66.2 L649.4 56.5 L657.7 41.1" fill="none" stroke="#e6b800" stroke-width="1.3" stroke-linejoin="round"/>
<path d="M55.5 453.5 L61.5 451.6 L67.6 449.8 L73.6 448.0 L79.6 446.1 L85.7 444.3 L91.7 442.5 L97.7 440.7 L103.7 438.9 L109.8 437.0 L115.8 435.1 L121.8 433.1 L127.9 431.1 L133.9 428.9 L139.9 426.8 L145.9 424.7 L152.0 422.5 L158.0 420.4 L164.0 418.2 L170.1 415.9 L176.1 413.4 L182.1 410.8 L188.2 407.9 L194.2 405.0 L200.2 401.9 L206.2 398.7 L212.3 395.4 L218.3 391.9 L224.3 388.4 L230.4 384.7 L236.4 380.9 L242.4 377.1 L248.5 373.1 L254.5 369.1 L260.5 365.0 L266.6 360.8 L272.6 356.6 L278.6 352.2 L284.6 347.8 L290.7 343.4 L296.7 339.0 L302.7 334.5 L308.8 330.1 L314.8 325.5 L320.8 321.0 L326.9 316.4 L332.9 311.8 L338.9 307.2 L344.9 302.5 L351.0 297.9 L357.0 293.3 L363.0 288.6 L369.1 284.0 L375.1 279.3 L393.2 267.8 L405.2 258.6 L416.7 250.1 L436.2 237.6 L469.7 219.5 L491.9 208.3 L536.5 190.2 L567.2 181.9 L583.9 174.9 L595.0 147.0 L611.8 113.6 L631.3 82.9 L645.2 60.6 L657.7 41.1" fill="none" stroke="#00c800" stroke-width="1" stroke-linejoin="round"/>
<path d="M55.5 451.0 L61.5 449.2 L67.6 447.4 L73.6 445.5 L79.6 443.7 L85.7 441.8 L91.7 440.0 L97.7 438.2 L103.7 436.4 L109.8 434.6 L115.8 432.7 L121.8 430.7 L127.9 428.6 L133.9 426.5 L139.9 424.4 L145.9 422.2 L152.0 420.1 L158.0 418.0 L164.0 415.8 L170.1 413.4 L176.1 411.0 L182.1 408.3 L188.2 405.5 L194.2 402.5 L200.2 399.4 L206.2 396.2 L212.3 392.9 L218.3 389.5 L224.3 385.9 L230.4 382.3 L236.4 378.5 L242.4 374.6 L248.5 370.7 L254.5 366.7 L260.5 362.6 L266.6 358.4 L272.6 354.1 L278.6 349.8 L284.6 345.4 L290.7 341.0 L296.7 336.6 L302.7 332.1 L308.8 327.6 L314.8 323.1 L320.8 318.5 L326.9 314.0 L332.9 309.4 L338.9 304.7 L344.9 300.1 L351.0 295.5 L357.0 290.8 L363.0 286.2 L369.1 281.5 L375.1 276.9 L381.1 272.2 L387.2 267.6 L393.2 262.9 L399.2 258.2 L405.2 253.4 L411.3 248.6 L417.3 243.7 L423.3 238.8 L429.4 233.7 L435.4 228.6 L441.4 223.5 L447.4 218.4 L453.5 213.3 L459.5 208.2 L465.5 203.1 L471.6 198.0 L477.6 192.9 L497.5 177.7 L514.2 170.7 L539.3 156.8 L561.6 145.6 L581.1 134.5 L597.3 126.1 L609.0 105.2 L622.9 84.3 L639.6 63.4 L657.7 41.1" fill="none" stroke="#00d0d8" stroke-width="1" stroke-linejoin="round"/>
<path d="M55.5 451.8 L58.5 450.9 L61.5 450.0 L64.5 449.1 L67.6 448.2 L70.6 447.2 L73.6 446.3 L76.6 445.4 L79.6 444.5 L82.6 443.6 L85.7 442.7 L88.7 441.7 L91.7 440.8 L94.7 439.9 L97.7 439.0 L100.7 438.1 L103.7 437.2 L106.8 436.3 L109.8 435.4 L112.8 434.5 L115.8 433.5 L118.8 432.5 L121.8 431.5 L124.8 430.5 L127.9 429.4 L130.9 428.4 L133.9 427.3 L136.9 426.3 L139.9 425.2 L142.9 424.1 L145.9 423.0 L149.0 422.0 L152.0 420.9 L155.0 419.9 L158.0 418.8 L161.0 417.7 L164.0 416.6 L167.1 415.4 L170.1 414.3 L173.1 413.0 L176.1 411.8 L179.1 410.5 L182.1 409.1 L185.1 407.7 L188.2 406.3 L191.2 404.8 L194.2 403.3 L197.2 401.8 L200.2 400.2 L203.2 398.7 L206.2 397.0 L209.3 395.4 L212.3 393.7 L215.3 392.0 L218.3 390.3 L221.3 388.6 L224.3 386.8 L227.4 384.9 L230.4 383.1 L233.4 381.2 L236.4 379.3 L239.4 377.4 L242.4 375.4 L245.4 373.5 L248.5 371.5 L251.5 369.5 L254.5 367.5 L257.5 365.5 L260.5 363.4 L263.5 361.3 L266.6 359.2 L269.6 357.1 L272.6 354.9 L275.6 352.8 L278.6 350.6 L281.6 348.4 L284.6 346.2 L287.7 344.0 L290.7 341.8 L293.7 339.6 L296.7 337.4 L299.7 335.1 L302.7 332.9 L305.7 330.7 L308.8 328.4 L311.8 326.2 L314.8 323.9 L317.8 321.6 L320.8 319.4 L323.8 317.1 L326.9 314.8 L329.9 312.5 L332.9 310.2 L335.9 307.9 L338.9 305.5 L341.9 303.2 L344.9 300.9 L348.0 298.6 L351.0 296.3 L354.0 294.0 L357.0 291.6 L360.0 289.3 L363.0 287.0 L366.0 284.7 L369.1 282.4 L372.1 280.0 L375.1 277.7 L378.1 275.4 L381.1 273.1 L384.1 270.7 L387.2 268.4 L390.2 266.0 L393.2 263.7 L396.2 261.3 L399.2 259.0 L402.2 256.6 L405.2 254.2 L408.3 251.8 L411.3 249.4 L414.3 247.0 L417.3 244.5 L420.3 242.1 L423.3 239.6 L426.3 237.1 L429.4 234.5 L432.4 232.0 L435.4 229.4 L438.4 226.8 L441.4 224.3 L444.4 221.8 L447.4 219.2 L450.5 216.7 L453.5 214.1 L456.5 211.5 L459.5 209.0 L462.5 206.4 L465.5 203.9 L468.6 201.3 L471.6 198.8 L474.6 196.2 L477.6 193.7 L480.6 191.1 L483.6 188.6 L486.6 186.0 L489.7 183.5 L492.7 181.0 L495.7 178.4 L498.7 175.9 L501.7 173.4 L504.7 170.8 L507.8 168.3 L510.8 165.8 L513.8 163.2 L516.8 160.7 L519.8 158.2 L522.8 155.6 L525.8 153.1 L528.9 150.5 L531.9 147.9 L534.9 145.4 L537.9 142.8 L540.9 140.2 L543.9 137.6 L546.9 135.0 L550.0 132.4 L553.0 129.7 L556.0 127.1 L559.0 124.4 L562.0 121.8 L565.0 119.2 L568.1 116.5 L571.1 113.9 L574.1 111.2 L577.1 108.6 L580.1 105.9 L583.1 103.3 L586.1 100.7 L589.2 98.1 L592.2 95.5 L595.2 92.9 L598.2 90.3 L601.2 87.7 L604.2 85.2 L607.2 82.6 L610.3 80.1 L613.3 77.6 L616.3 75.0 L619.3 72.5 L622.3 70.0 L625.3 67.5 L628.4 65.0 L631.4 62.5 L634.4 60.0 L637.4 57.5 L640.4 55.0 L643.4 52.5 L646.4 50.0 L649.5 47.5 L652.5 45.0 L655.5 42.5 L658.5 40.0" fill="none" stroke="#000" stroke-width="4.7" stroke-linejoin="round"/>
<rect x="55" y="40" width="1" height="651" fill="#000"/>
<rect x="55" y="40" width="604" height="1" fill="#000"/>
<rect x="55" y="689" width="604" height="2" fill="#000"/>
<rect x="56" y="580" width="5" height="2" fill="#000"/>
<rect x="56" y="472" width="5" height="2" fill="#000"/>
<rect x="56" y="364" width="5" height="2" fill="#000"/>
<rect x="56" y="255" width="5" height="2" fill="#000"/>
<rect x="56" y="147" width="5" height="2" fill="#000"/>
<rect x="115" y="682" width="1" height="7" fill="#000"/>
<rect x="175" y="682" width="1" height="7" fill="#000"/>
<rect x="175" y="41" width="1" height="6" fill="#000"/>
<rect x="235" y="682" width="1" height="7" fill="#000"/>
<rect x="296" y="682" width="1" height="7" fill="#000"/>
<rect x="296" y="41" width="1" height="6" fill="#000"/>
<rect x="356" y="682" width="1" height="7" fill="#000"/>
<rect x="416" y="682" width="1" height="7" fill="#000"/>
<rect x="416" y="41" width="1" height="6" fill="#000"/>
<rect x="477" y="682" width="1" height="7" fill="#000"/>
<rect x="537" y="682" width="1" height="7" fill="#000"/>
<rect x="537" y="41" width="1" height="6" fill="#000"/>
<rect x="597" y="682" width="1" height="7" fill="#000"/>
<rect x="658" y="682" width="1" height="7" fill="#000"/>
<text x="50.3" y="693.9" font-size="14.67" text-anchor="end">-20</text>
<text x="50.3" y="585.6" font-size="14.67" text-anchor="end">0</text>
<text x="50.3" y="477.4" font-size="14.67" text-anchor="end">20</text>
<text x="50.3" y="369.1" font-size="14.67" text-anchor="end">40</text>
<text x="50.3" y="260.9" font-size="14.67" text-anchor="end">60</text>
<text x="50.3" y="152.6" font-size="14.67" text-anchor="end">80</text>
<text x="50.3" y="44.4" font-size="14.67" text-anchor="end">100</text>
<text x="55.5" y="707.5" font-size="14.67" text-anchor="middle">0</text>
<text x="115.8" y="707.5" font-size="14.67" text-anchor="middle">10</text>
<text x="176.1" y="707.5" font-size="14.67" text-anchor="middle">20</text>
<text x="236.4" y="707.5" font-size="14.67" text-anchor="middle">30</text>
<text x="296.7" y="707.5" font-size="14.67" text-anchor="middle">40</text>
<text x="357.0" y="707.5" font-size="14.67" text-anchor="middle">50</text>
<text x="417.3" y="707.5" font-size="14.67" text-anchor="middle">60</text>
<text x="477.6" y="707.5" font-size="14.67" text-anchor="middle">70</text>
<text x="537.9" y="707.5" font-size="14.67" text-anchor="middle">80</text>
<text x="598.2" y="707.5" font-size="14.67" text-anchor="middle">90</text>
<text x="658.5" y="707.5" font-size="14.67" text-anchor="middle">100</text>
<text x="354.8" y="726.8" font-size="14.0" font-weight="bold" text-anchor="middle">Input L*</text>
<text transform="translate(15.2,366.3) rotate(-90)" font-size="14.2" font-weight="bold" text-anchor="middle">Output L*, 10 a*, 10 b*, 10 c*</text>
<rect x="63" y="47" width="163" height="75" fill="#000"/><rect x="64" y="49" width="161" height="71" fill="#fff"/>
<line x1="70.5" y1="57.6" x2="97" y2="57.6" stroke="#0040ff" stroke-width="2.8" stroke-dasharray="2 2"/>
<text x="106.5" y="62.8" font-size="14.67">10x a*</text>
<line x1="70.5" y1="75.7" x2="97" y2="75.7" stroke="#ff0080" stroke-width="2.8" stroke-dasharray="2 2"/>
<text x="106.5" y="80.5" font-size="14.67">10x b*</text>
<line x1="70.5" y1="92.5" x2="97" y2="92.5" stroke="#00c000" stroke-width="2.8" stroke-dasharray="2 2"/>
<text x="106.5" y="97.8" font-size="14.67">10x c* (Chroma)</text>
<line x1="70" y1="109.9" x2="97" y2="109.9" stroke="#000" stroke-width="2"/><circle cx="83.5" cy="109.9" r="2.3" fill="#000"/>
<text x="106.5" y="114.8" font-size="14.67">L*</text>
<text x="638.3" y="448.4" font-size="14.5" text-anchor="end">25-Jan-2023 10:24:46</text>
<text x="638.6" y="448.4" font-size="14.5" text-anchor="end">25-Jan-2023 10:24:48</text>
<text x="638.3" y="465.6" font-size="14.5" text-anchor="end">Dmax =1.68</text>
<text x="638.6" y="465.6" font-size="14.5" text-anchor="end">Dmax =1.63</text>
<text x="638.3" y="482.6" font-size="14.5" text-anchor="end">Thin solid lines are RYGCBM primaries</text>
<text x="638.6" y="482.6" font-size="14.5" text-anchor="end">Thin solid lines are RYGCBM primaries</text>
<text x="638.3" y="499.5" font-size="14.5" text-anchor="end">for HSL saturation S = 1.</text>
<text x="638.6" y="499.5" font-size="14.5" text-anchor="end">for HSL saturation S = 1.</text>
<path d="M160.5 490.5 L160.5 506.5 L164.2 503 L166.8 509 L169 508 L166.5 502.2 L171.5 502.2 Z" fill="#fff" stroke="#000" stroke-width="1" stroke-linejoin="miter"/>
</svg>
<div class="a" style="left:858px;top:0;width:90px;height:348px;background:linear-gradient(to bottom,#f6f4f4 0%,#eeecec 6%,#d6d4d4 15%,#b9b7b7 27%,#9a9898 40%,#7b7979 54%,#626060 66%,#4e4c4c 78%,#413f3e 89%,#3a3837 100%)"></div>
<div class="sunk" style="left:741px;top:363px;width:15px;height:14px;background:#fff"></div>
<div class="t" style="left:763px;top:363.51px;font-size:16px;">Zoom</div>
<div class="btn " style="left:741px;top:388px;width:67px;height:30px;"><span>Z-Out</span></div>
<div class="pn" style="left:829px;top:348px;width:245px;height:43px;background:#808080"></div>
<div class="btn " style="left:837px;top:356px;width:54px;height:30px;padding-top:1px"><span>Inp</span></div>
<div class="btn " style="left:897px;top:356px;width:54px;height:30px;padding-top:1px"><span>I&gt;M</span></div>
<div class="btn " style="left:956px;top:356px;width:54px;height:30px;padding-top:1px"><span>Outp</span></div>
<div class="btn y b" style="left:1017px;top:356px;width:54px;height:30px;font-size:20px;padding-top:0;padding-bottom:1px"><span>O&gt;M</span></div>
<div class="t" style="left:844px;top:401.71px;font-size:16px;letter-spacing:-0.22px">Black Pt. Comp.</div>
<div class="cb" style="left:959px;top:393px;width:112px;height:27px;background:#fff;"><span class="tx" style="left:5px;padding-top:3.0px;letter-spacing:0px"><span>Both</span></span><span class="ar" style="width:20px;right:1px"></span></div>
<div class="pn" style="left:741px;top:427px;width:336px;height:41px;background:#808080"></div>
<div class="cb" style="left:746px;top:430px;width:325px;height:32px;background:#fff;font-weight:bold;font-size:19.3px"><span class="tx" style="left:4px;padding-top:2px;letter-spacing:0px"><span>Black &amp; White density response</span></span><span class="ar" style="width:21px;right:2px"></span></div>
<div class="pn" style="left:741px;top:470px;width:336px;height:198px"></div>
<div class="btn dis" style="left:749px;top:479px;width:111px;height:35px;"><span>Reset scale</span></div>
<div class="btn dis" style="left:865px;top:479px;width:107px;height:35px;"><span>Reset view</span></div>
<div class="btn dis" style="left:980px;top:479px;width:91px;height:35px;"><span>Top view</span></div>
<div class="cb" style="left:844px;top:519px;width:227px;height:27px;background:#fff;"><span class="tx" style="left:4px;padding-top:4px;letter-spacing:0px"><span>Output vs Input L* a* b* c*</span></span><span class="ar" style="width:20px;right:2px"></span></div>
<div class="pn" style="left:741px;top:622px;width:122px;height:46px"></div>
<div class="btn b" style="left:748px;top:630px;width:108px;height:32px;font-size:19.3px;padding-top:0"><span>Print Test</span></div>
<div class="t" style="right:11px;top:618.71px;font-size:16px;">Saturation</div>
<div class="t" style="left:917px;top:643.71px;font-size:16px;">1</div>
<div class="a" style="left:931px;top:641px;width:140px;height:20px;background:#e3e3e3;border-top:1px solid #a8a8a8;border-bottom:1px solid #a8a8a8"></div>
<div class="btn" style="left:931px;top:641px;width:21px;height:20px"></div>
<div class="btn" style="left:1030px;top:641px;width:19px;height:20px"></div>
<div class="btn" style="left:1050px;top:641px;width:21px;height:20px"></div>
<svg class="a" style="left:931px;top:641px" width="140" height="20" viewBox="931 641 140 20"><path d="M942.6 645.8 L942.6 655.4 L936.8 650.6 Z M1058.2 645.8 L1058.2 655.4 L1064 650.6 Z" fill="#000"/></svg>
<div class="pn" style="left:741px;top:667px;width:336px;height:48px"></div>
<div class="sunk" style="left:748px;top:677px;width:322px;height:28px"></div>
<div class="t" style="left:866px;top:680.71px;font-size:16px;">not selected</div>
<div class="pn" style="left:749px;top:721px;width:200px;height:86px"></div>
<div class="t" style="left:763px;top:733.10px;font-size:19.15px;font-weight:bold;">Display A</div>
<div class="btn b" style="left:877px;top:727px;width:64px;height:37px;font-size:20.5px;padding-top:0;padding-bottom:2px"><span>View</span></div>
<div class="cb" style="left:756px;top:765px;width:54px;height:27px;background:#fff;"><span class="tx" style="left:4px;padding-top:3.0px;letter-spacing:0px"><span>1</span></span><span class="ar" style="width:20px;right:2px"></span></div>
<div class="t" style="left:822px;top:774.71px;font-size:16px;word-spacing:-1.35px">IN&nbsp;&nbsp;OUT</div>
<div class="cb" style="left:889px;top:767px;width:55px;height:27px;background:#fff;"><span class="tx" style="left:4px;padding-top:3.0px;letter-spacing:0px"><span>3</span></span><span class="ar" style="width:20px;right:2px"></span></div>
<div class="pn" style="left:749px;top:813px;width:200px;height:100px"></div>
<div class="t" style="left:763px;top:825.22px;font-size:19.0px;font-weight:bold;">Display B</div>
<div class="btn b" style="left:878px;top:819px;width:65px;height:37px;font-size:20.5px;padding-top:0;padding-bottom:2px"><span>View</span></div>
<div class="cb" style="left:756px;top:859px;width:54px;height:27px;background:#fff;"><span class="tx" style="left:4px;padding-top:3.0px;letter-spacing:0px"><span>2</span></span><span class="ar" style="width:20px;right:2px"></span></div>
<div class="t" style="left:822px;top:866.71px;font-size:16px;word-spacing:-1.35px">IN&nbsp;&nbsp;OUT</div>
<div class="cb" style="left:891px;top:859px;width:55px;height:27px;background:#fff;"><span class="tx" style="left:4px;padding-top:3.0px;letter-spacing:0px"><span>4</span></span><span class="ar" style="width:20px;right:2px"></span></div>
<div class="btn " style="left:975px;top:721px;width:96px;height:35px;padding-top:0"><span>Help</span></div>
<div class="btn " style="left:975px;top:770px;width:96px;height:35px;padding-top:0"><span>Exit</span></div>
<svg class="a" style="left:958px;top:844px" width="82" height="50" viewBox="-1 -1 82 50">
<defs><linearGradient id="lg" x1="0" x2="1" y1="0" y2="0"><stop offset="0" stop-color="#000058"/><stop offset="0.5" stop-color="#0000a8"/><stop offset="1" stop-color="#0000d2"/></linearGradient>
<linearGradient id="gg" x1="0" x2="1" y1="0" y2="0"><stop offset="0" stop-color="#001800"/><stop offset="0.45" stop-color="#006000"/><stop offset="1" stop-color="#008400"/></linearGradient></defs>
<rect x="-1" y="-1" width="82" height="50" fill="#fbfbfb"/>
<rect width="80" height="48" fill="url(#lg)"/>
<path d="M1 0 L80 0 L80 11.4 Z" fill="url(#gg)"/>
<path d="M1 0 L80 11.4 L80 16.3 Z" fill="#fff"/>
<path d="M1 0 L80 16.3 L80 23.4 Z" fill="#cc3a00"/>
<path d="M1 0 L80 23.4 L80 24.8 Z" fill="#fff"/>
<path d="M1 0 L80 24.8 L80 28 Z" fill="#9a009a"/>
<path d="M1 0 L80 28 L80 29.6 Z" fill="#f0f0ff"/>
<path d="M20 4.6 L80 17.2" stroke="#fff" stroke-width="1" stroke-dasharray="2.2 1.6" fill="none"/>
<path d="M40 13.6 L80 26.4" stroke="#fff" stroke-width="1" stroke-dasharray="1.8 1.6" fill="none"/>
<path d="M60 22.9 L80 30.6" stroke="#dcdcff" stroke-width="1" stroke-dasharray="1.6 1.6" fill="none"/>
<path d="M4.6 8 C5.8 6.8 8 7 10 8.2 L31.8 20.8 L10.2 28.6 C6 24 2.6 14 4.6 8 Z" fill="#ffffc6"/>
<text x="2.4" y="44.6" style="font-family:'Liberation Serif',serif;font-style:italic;font-size:17px" fill="#fff" textLength="76" lengthAdjust="spacingAndGlyphs">Gamutvision</text>
</svg>
<div class="cb" style="left:-2px;top:787px;width:352px;height:27px;background:#f0f0f0;"><span class="tx" style="left:1px;padding-top:5.0px;letter-spacing:0px"><span>*sRGB&nbsp;&nbsp; (IEC6 1996-2.1 sRGB)</span></span><span class="ar" style="width:21px;right:2px"></span></div>
<div class="a" style="left:0;top:814px;width:306px;height:53px;background:#808080;border-top:1px solid #3c78d8;border-right:1px solid #303030"></div>
<div class="btn b" style="left:2px;top:827px;width:64px;height:36px;font-size:20.5px;padding-top:0;box-shadow:inset 1px 1px 0 #ffffe1,inset -1px -1px 0 #696969,inset 2px 2px 0 #fff,inset -2px -2px 0 #a0a0a0"><span>View</span></div>
<div class="cb" style="left:100px;top:828px;width:200px;height:26px;background:#f0f0f0;border-bottom:1px solid #3c78d8"><span class="tx" style="left:4px;padding-top:4.9px;letter-spacing:0px"><span>Colorimetric</span></span><span class="ar" style="width:20px;right:2px"></span></div>
<div class="t" style="left:315px;top:835.71px;font-size:16px;">Rendering</div>
<div class="cb" style="left:-2px;top:867px;width:352px;height:27px;background:#f0f0f0;"><span class="tx" style="left:1px;padding-top:4.6px;letter-spacing:-0.14px"><span>CN_PM101_ET8550_VFA_v2-xrite.icm</span></span><span class="ar" style="width:21px;right:2px"></span></div>
<div class="cb" style="left:356px;top:787px;width:354px;height:27px;background:#ffffcc;"><span class="tx" style="left:5px;padding-top:5.0px;letter-spacing:0px"><span>*sRGB&nbsp;&nbsp; (IEC6 1996-2.1 sRGB)</span></span><span class="ar" style="width:21px;right:2px"></span></div>
<div class="a" style="left:398px;top:814px;width:311px;height:53px;background:#4a7dcb;border-left:1px solid #303030;border-right:1px solid #303030"></div>
<div class="cb" style="left:403px;top:828px;width:201px;height:26px;background:#ffffe8;"><span class="tx" style="left:5px;padding-top:3.9px;letter-spacing:0px"><span>Perceptual</span></span><span class="ar" style="width:20px;right:2px"></span></div>
<div class="btn y b" style="left:639px;top:827px;width:64px;height:36px;font-size:20.5px;padding-top:0"><span>View</span></div>
<div class="cb" style="left:356px;top:867px;width:354px;height:27px;background:#e6ffe6;"><span class="tx" style="left:5px;padding-top:4.6px;letter-spacing:-0.14px"><span>CN_PM101_ET8550_VFA_argy-v3.icm</span></span><span class="ar" style="width:21px;right:2px"></span></div>
<div class="t" style="left:716px;top:795.49px;font-size:18.67px;font-weight:bold;">3</div>
<div class="t" style="left:716px;top:875.49px;font-size:18.67px;font-weight:bold;">4</div>
</body></html>
